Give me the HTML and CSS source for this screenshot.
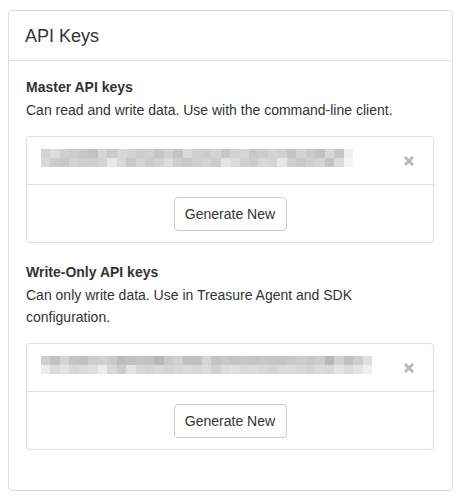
FILE: index.html
```html
<!DOCTYPE html>
<html>
<head>
<meta charset="utf-8">
<title>API Keys</title>
<link rel="stylesheet" href="styles.css">
</head>
<body>
<div class="panel">
  <div class="panel-header">API Keys</div>
  <div class="panel-body">
    <section class="key-section">
      <h3 class="key-title">Master API keys</h3>
      <p class="key-desc">Can read and write data. Use with the command-line client.</p>
      <div class="key-box">
        <div class="key-row">
          <svg class="key-blur key-blur-1" viewBox="0 0 33 2" preserveAspectRatio="none" aria-hidden="true">
            <g shape-rendering="crispEdges">
              <rect x="0" y="0" width="1" height="1" fill="#d4d4d4"/><rect x="1" y="0" width="1" height="1" fill="#dcdcdc"/><rect x="2" y="0" width="1" height="1" fill="#d0d0d0"/><rect x="3" y="0" width="1" height="1" fill="#cccccc"/><rect x="4" y="0" width="1" height="1" fill="#c8c8c8"/><rect x="5" y="0" width="1" height="1" fill="#c2c2c2"/><rect x="6" y="0" width="1" height="1" fill="#d6d6d6"/><rect x="7" y="0" width="1" height="1" fill="#cacaca"/><rect x="8" y="0" width="1" height="1" fill="#d8d8d8"/><rect x="9" y="0" width="1" height="1" fill="#d4d4d4"/><rect x="10" y="0" width="1" height="1" fill="#cccccc"/><rect x="11" y="0" width="1" height="1" fill="#d0d0d0"/><rect x="12" y="0" width="1" height="1" fill="#c6c6c6"/><rect x="13" y="0" width="1" height="1" fill="#d0d0d0"/><rect x="14" y="0" width="1" height="1" fill="#c4c4c4"/><rect x="15" y="0" width="1" height="1" fill="#dadada"/><rect x="16" y="0" width="1" height="1" fill="#d0d0d0"/><rect x="17" y="0" width="1" height="1" fill="#cccccc"/><rect x="18" y="0" width="1" height="1" fill="#d4d4d4"/><rect x="19" y="0" width="1" height="1" fill="#c8c8c8"/><rect x="20" y="0" width="1" height="1" fill="#d2d2d2"/><rect x="21" y="0" width="1" height="1" fill="#d6d6d6"/><rect x="22" y="0" width="1" height="1" fill="#c8c8c8"/><rect x="23" y="0" width="1" height="1" fill="#cccccc"/><rect x="24" y="0" width="1" height="1" fill="#d4d4d4"/><rect x="25" y="0" width="1" height="1" fill="#d0d0d0"/><rect x="26" y="0" width="1" height="1" fill="#c4c4c4"/><rect x="27" y="0" width="1" height="1" fill="#d2d2d2"/><rect x="28" y="0" width="1" height="1" fill="#cacaca"/><rect x="29" y="0" width="1" height="1" fill="#c2c2c2"/><rect x="30" y="0" width="1" height="1" fill="#d8d8d8"/><rect x="31" y="0" width="1" height="1" fill="#c6c6c6"/><rect x="32" y="0" width="1" height="1" fill="#f0f0f0"/>
              <rect x="0" y="1" width="1" height="1" fill="#d8d8d8"/><rect x="1" y="1" width="1" height="1" fill="#cccccc"/><rect x="2" y="1" width="1" height="1" fill="#c8c8c8"/><rect x="3" y="1" width="1" height="1" fill="#d4d4d4"/><rect x="4" y="1" width="1" height="1" fill="#d0d0d0"/><rect x="5" y="1" width="1" height="1" fill="#cecece"/><rect x="6" y="1" width="1" height="1" fill="#d4d4d4"/><rect x="7" y="1" width="1" height="1" fill="#e8e8e8"/><rect x="8" y="1" width="1" height="1" fill="#d8d8d8"/><rect x="9" y="1" width="1" height="1" fill="#c8c8c8"/><rect x="10" y="1" width="1" height="1" fill="#d4d4d4"/><rect x="11" y="1" width="1" height="1" fill="#cccccc"/><rect x="12" y="1" width="1" height="1" fill="#d0d0d0"/><rect x="13" y="1" width="1" height="1" fill="#dcdcdc"/><rect x="14" y="1" width="1" height="1" fill="#cccccc"/><rect x="15" y="1" width="1" height="1" fill="#c8c8c8"/><rect x="16" y="1" width="1" height="1" fill="#d0d0d0"/><rect x="17" y="1" width="1" height="1" fill="#d4d4d4"/><rect x="18" y="1" width="1" height="1" fill="#cccccc"/><rect x="19" y="1" width="1" height="1" fill="#e4e4e4"/><rect x="20" y="1" width="1" height="1" fill="#dcdcdc"/><rect x="21" y="1" width="1" height="1" fill="#d0d0d0"/><rect x="22" y="1" width="1" height="1" fill="#cccccc"/><rect x="23" y="1" width="1" height="1" fill="#d8d8d8"/><rect x="24" y="1" width="1" height="1" fill="#d4d4d4"/><rect x="25" y="1" width="1" height="1" fill="#e6e6e6"/><rect x="26" y="1" width="1" height="1" fill="#d0d0d0"/><rect x="27" y="1" width="1" height="1" fill="#c8c8c8"/><rect x="28" y="1" width="1" height="1" fill="#d0d0d0"/><rect x="29" y="1" width="1" height="1" fill="#d4d4d4"/><rect x="30" y="1" width="1" height="1" fill="#c4c4c4"/><rect x="31" y="1" width="1" height="1" fill="#dcdcdc"/><rect x="32" y="1" width="1" height="1" fill="#f4f4f4"/>
            </g>
          </svg>
          <button class="key-remove" type="button" aria-label="Remove key">
            <svg viewBox="0 0 12 12" width="12" height="12"><path d="M2 2 L10 10 M10 2 L2 10" stroke="#b8b8b8" stroke-width="3" stroke-linecap="butt" fill="none"/></svg>
          </button>
        </div>
        <div class="key-footer">
          <button class="btn" type="button">Generate New</button>
        </div>
      </div>
    </section>
    <section class="key-section">
      <h3 class="key-title">Write-Only API keys</h3>
      <p class="key-desc">Can only write data. Use in Treasure Agent and SDK configuration.</p>
      <div class="key-box">
        <div class="key-row">
          <svg class="key-blur key-blur-2" viewBox="0 0 35 2" preserveAspectRatio="none" aria-hidden="true">
            <g shape-rendering="crispEdges">
              <rect x="0" y="0" width="1" height="1" fill="#cecece"/><rect x="1" y="0" width="1" height="1" fill="#c2c2c2"/><rect x="2" y="0" width="1" height="1" fill="#d4d4d4"/><rect x="3" y="0" width="1" height="1" fill="#c4c4c4"/><rect x="4" y="0" width="1" height="1" fill="#c0c0c0"/><rect x="5" y="0" width="1" height="1" fill="#cccccc"/><rect x="6" y="0" width="1" height="1" fill="#d0d0d0"/><rect x="7" y="0" width="1" height="1" fill="#cacaca"/><rect x="8" y="0" width="1" height="1" fill="#bcbcbc"/><rect x="9" y="0" width="1" height="1" fill="#c0c0c0"/><rect x="10" y="0" width="1" height="1" fill="#c4c4c4"/><rect x="11" y="0" width="1" height="1" fill="#c2c2c2"/><rect x="12" y="0" width="1" height="1" fill="#b8b8b8"/><rect x="13" y="0" width="1" height="1" fill="#c8c8c8"/><rect x="14" y="0" width="1" height="1" fill="#d0d0d0"/><rect x="15" y="0" width="1" height="1" fill="#c0c0c0"/><rect x="16" y="0" width="1" height="1" fill="#c2c2c2"/><rect x="17" y="0" width="1" height="1" fill="#d4d4d4"/><rect x="18" y="0" width="1" height="1" fill="#c4c4c4"/><rect x="19" y="0" width="1" height="1" fill="#c8c8c8"/><rect x="20" y="0" width="1" height="1" fill="#c4c4c4"/><rect x="21" y="0" width="1" height="1" fill="#c8c8c8"/><rect x="22" y="0" width="1" height="1" fill="#c4c4c4"/><rect x="23" y="0" width="1" height="1" fill="#c8c8c8"/><rect x="24" y="0" width="1" height="1" fill="#c6c6c6"/><rect x="25" y="0" width="1" height="1" fill="#c4c4c4"/><rect x="26" y="0" width="1" height="1" fill="#c8c8c8"/><rect x="27" y="0" width="1" height="1" fill="#cccccc"/><rect x="28" y="0" width="1" height="1" fill="#c8c8c8"/><rect x="29" y="0" width="1" height="1" fill="#cccccc"/><rect x="30" y="0" width="1" height="1" fill="#b8b8b8"/><rect x="31" y="0" width="1" height="1" fill="#d0d0d0"/><rect x="32" y="0" width="1" height="1" fill="#c0c0c0"/><rect x="33" y="0" width="1" height="1" fill="#cccccc"/><rect x="34" y="0" width="1" height="1" fill="#e0e0e0"/>
              <rect x="0" y="1" width="1" height="1" fill="#ececec"/><rect x="1" y="1" width="1" height="1" fill="#dcdcdc"/><rect x="2" y="1" width="1" height="1" fill="#e4e4e4"/><rect x="3" y="1" width="1" height="1" fill="#d8d8d8"/><rect x="4" y="1" width="1" height="1" fill="#dcdcdc"/><rect x="5" y="1" width="1" height="1" fill="#e0e0e0"/><rect x="6" y="1" width="1" height="1" fill="#ececec"/><rect x="7" y="1" width="1" height="1" fill="#d8d8d8"/><rect x="8" y="1" width="1" height="1" fill="#cccccc"/><rect x="9" y="1" width="1" height="1" fill="#e4e4e4"/><rect x="10" y="1" width="1" height="1" fill="#d8d8d8"/><rect x="11" y="1" width="1" height="1" fill="#d4d4d4"/><rect x="12" y="1" width="1" height="1" fill="#d8d8d8"/><rect x="13" y="1" width="1" height="1" fill="#d4d4d4"/><rect x="14" y="1" width="1" height="1" fill="#d8d8d8"/><rect x="15" y="1" width="1" height="1" fill="#dcdcdc"/><rect x="16" y="1" width="1" height="1" fill="#d8d8d8"/><rect x="17" y="1" width="1" height="1" fill="#dcdcdc"/><rect x="18" y="1" width="1" height="1" fill="#d0d0d0"/><rect x="19" y="1" width="1" height="1" fill="#dcdcdc"/><rect x="20" y="1" width="1" height="1" fill="#e0e0e0"/><rect x="21" y="1" width="1" height="1" fill="#dadada"/><rect x="22" y="1" width="1" height="1" fill="#dcdcdc"/><rect x="23" y="1" width="1" height="1" fill="#d8d8d8"/><rect x="24" y="1" width="1" height="1" fill="#d4d4d4"/><rect x="25" y="1" width="1" height="1" fill="#dadada"/><rect x="26" y="1" width="1" height="1" fill="#dcdcdc"/><rect x="27" y="1" width="1" height="1" fill="#d8d8d8"/><rect x="28" y="1" width="1" height="1" fill="#d4d4d4"/><rect x="29" y="1" width="1" height="1" fill="#dadada"/><rect x="30" y="1" width="1" height="1" fill="#d8d8d8"/><rect x="31" y="1" width="1" height="1" fill="#e4e4e4"/><rect x="32" y="1" width="1" height="1" fill="#dcdcdc"/><rect x="33" y="1" width="1" height="1" fill="#e4e4e4"/><rect x="34" y="1" width="1" height="1" fill="#f0f0f0"/>
            </g>
          </svg>
          <button class="key-remove" type="button" aria-label="Remove key">
            <svg viewBox="0 0 12 12" width="12" height="12"><path d="M2 2 L10 10 M10 2 L2 10" stroke="#b8b8b8" stroke-width="3" stroke-linecap="butt" fill="none"/></svg>
          </button>
        </div>
        <div class="key-footer">
          <button class="btn" type="button">Generate New</button>
        </div>
      </div>
    </section>
  </div>
</div>
</body>
</html>
```
FILE: styles.css
```css
* { box-sizing: border-box; }

html, body { background: #fff; }

body {
  margin: 10px 0 0 8px;
  font-family: "Liberation Sans", Arial, Helvetica, sans-serif;
  font-size: 14px;
  color: #333;
}

.panel {
  width: 445px;
  border: 1px solid #dcdcdc;
  border-radius: 4px;
  background: #fff;
}

.panel-header {
  height: 50px;
  padding: 0 17px 0 16px;
  border-bottom: 1px solid #e0e0e0;
  display: flex;
  align-items: center;
  font-size: 18px;
  line-height: 20px;
  color: #333;
}

.panel-body {
  padding: 16px 18px 40px 17px;
  display: flex;
  flex-direction: column;
  gap: 19px;
}

.key-title {
  margin: 0 0 1px;
  font-size: 14px;
  font-weight: bold;
  line-height: 21px;
}

.key-desc {
  margin: 0 0 15px;
  line-height: 22px;
  padding-right: 20px;
}

.key-box {
  border: 1px solid #dddddd;
  border-radius: 4px;
}

.key-row {
  height: 48px;
  padding: 12px 18px 0 14px;
  border-bottom: 1px solid #dddddd;
  display: flex;
  align-items: flex-start;
  justify-content: space-between;
}

.key-blur {
  display: block;
  height: 18px;
  filter: blur(0.6px);
}

.key-blur-1 { width: 312px; }
.key-blur-2 { width: 331px; }

.key-remove {
  margin: 6px 0 0;
  padding: 0;
  border: 0;
  background: none;
  width: 12px;
  height: 12px;
  display: flex;
}

.key-footer {
  padding: 12px 0 11px;
  display: flex;
  justify-content: center;
}

.btn {
  height: 34px;
  width: 113px;
  padding: 0;
  border: 1px solid #cccccc;
  border-radius: 4px;
  background: #fff;
  font-family: "Liberation Sans", Arial, Helvetica, sans-serif;
  font-size: 14px;
  color: #333;
}
```
